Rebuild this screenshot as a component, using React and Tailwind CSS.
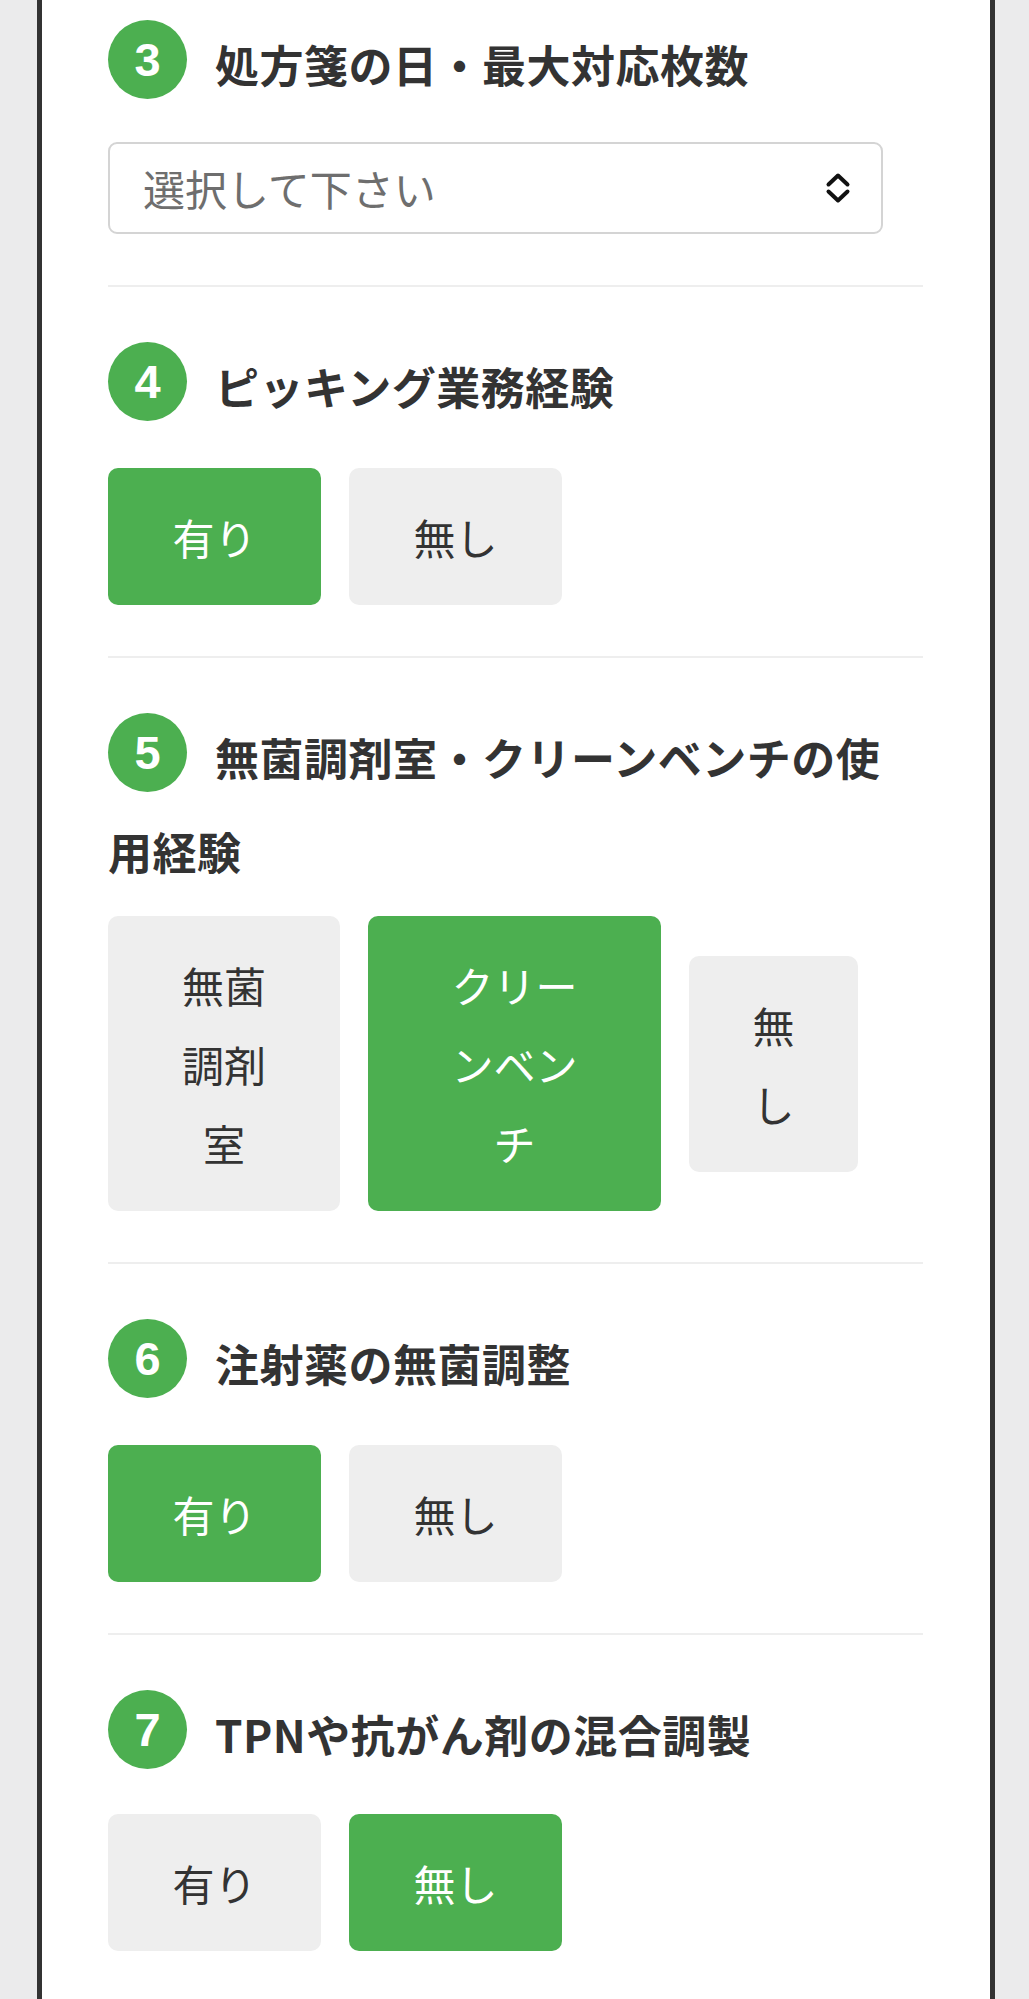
import React from "react";

const FONT = "font-['Noto_Sans_CJK_JP','Noto_Sans',sans-serif]";

function Title({ n, children }) {
  return (
    <p className="text-[44px] tracking-[0.5px] leading-[94px] font-bold text-[#333333]">
      <span className="inline-flex align-top mt-[3px] mr-[28px] w-[79px] h-[79px] rounded-full bg-[#4caf50] items-center justify-center text-white font-['Liberation_Sans',Arial,sans-serif] text-[47px] leading-none tracking-normal font-bold">
        {n}
      </span>
      {children}
    </p>
  );
}

function Btn({ active, className = "", children }) {
  return (
    <div
      className={
        (active ? "bg-[#4caf50] text-white " : "bg-[#eeeeee] text-[#333333] ") +
        "rounded-[10px] py-[29px] text-center text-[42px] leading-[79px] " +
        className
      }
    >
      {children}
    </div>
  );
}

function Chevron() {
  return (
    <svg viewBox="0 0 26 34" className="w-[26px] h-[34px]" fill="none" stroke="#111111" strokeWidth="4" strokeLinecap="round" strokeLinejoin="round">
      <path d="M3.5 13.5 L13 4.5 L22.5 13.5" />
      <path d="M3.5 20.5 L13 29.5 L22.5 20.5" />
    </svg>
  );
}

export default function App() {
  return (
    <div className={`w-[1029px] h-[1999px] overflow-hidden bg-[#ebebec] ${FONT}`}>
      <div className="ml-[37px] w-[958px] h-full bg-white border-x-[5px] border-[#333333] pl-[66px] pr-[67px]">
        {/* 3 */}
        <section className="pt-[17px] pb-[51px] border-b-2 border-[#eeeeee]">
          <Title n="3">処方箋の日・最大対応枚数</Title>
          <div className="mt-[31px] w-[775px] h-[92px] rounded-[9px] border-2 border-[#d4d4d4] flex items-center justify-between pl-[33px] pr-[30px]">
            <span className="text-[42px] text-[#6e6e6e] leading-none">選択して下さい</span>
            <Chevron />
          </div>
        </section>

        {/* 4 */}
        <section className="pt-[52px] pb-[51px] border-b-2 border-[#eeeeee]">
          <Title n="4">ピッキング業務経験</Title>
          <div className="mt-[35px] flex gap-[28px]">
            <Btn active className="w-[213px]">有り</Btn>
            <Btn className="w-[213px]">無し</Btn>
          </div>
        </section>

        {/* 5 */}
        <section className="pt-[52px] pb-[51px] border-b-2 border-[#eeeeee]">
          <Title n="5">無菌調剤室・クリーンベンチの使用経験</Title>
          <div className="mt-[18px] flex items-center gap-[28px]">
            <Btn className="w-[232px] px-[60px]">無菌調剤室</Btn>
            <Btn active className="w-[293px] px-[70px]">クリーンベンチ</Btn>
            <Btn className="w-[169px] px-[55px]">無し</Btn>
          </div>
        </section>

        {/* 6 */}
        <section className="pt-[52px] pb-[51px] border-b-2 border-[#eeeeee]">
          <Title n="6">注射薬の無菌調整</Title>
          <div className="mt-[35px] flex gap-[28px]">
            <Btn active className="w-[213px]">有り</Btn>
            <Btn className="w-[213px]">無し</Btn>
          </div>
        </section>

        {/* 7 */}
        <section className="pt-[52px] pb-[51px]">
          <Title n="7">TPNや抗がん剤の混合調製</Title>
          <div className="mt-[33px] flex gap-[28px]">
            <Btn className="w-[213px]">有り</Btn>
            <Btn active className="w-[213px]">無し</Btn>
          </div>
        </section>
      </div>
    </div>
  );
}
